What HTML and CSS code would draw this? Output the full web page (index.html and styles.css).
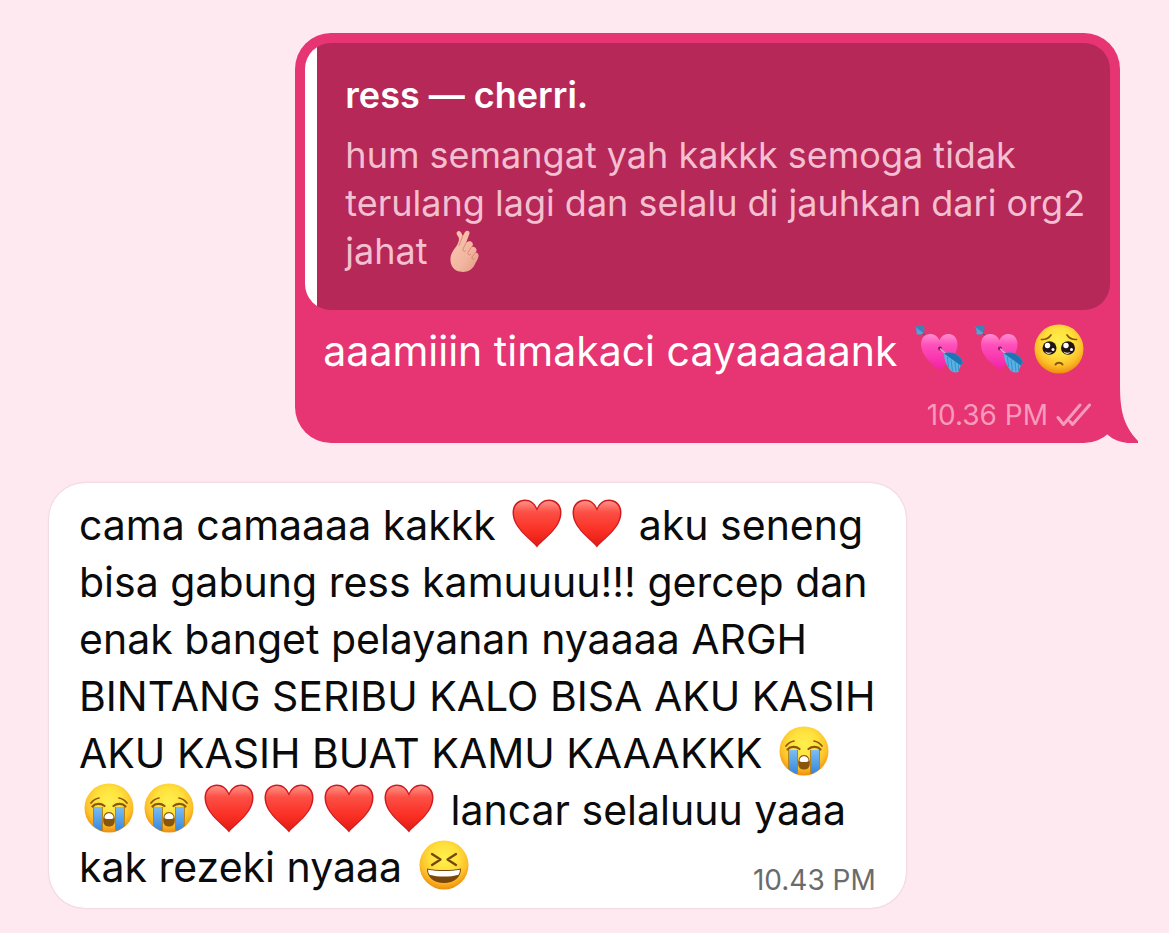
FILE: index.html
```html
<!DOCTYPE html>
<html lang="id">
<head>
    <meta charset="UTF-8">
    <meta name="viewport" content="width=device-width, initial-scale=1.0">
    <title>Chat</title>
    <link rel="stylesheet" href="styles.css">
</head>
<body>
    <svg class="sprite" aria-hidden="true">
        <defs>
            <radialGradient id="faceFill" cx="50%" cy="36%" r="64%">
                <stop offset="0" stop-color="#fff04e"/>
                <stop offset="0.45" stop-color="#ffe03c"/>
                <stop offset="0.75" stop-color="#fdc02a"/>
                <stop offset="1" stop-color="#ee8d0c"/>
            </radialGradient>
            <linearGradient id="heartFill" x1="0" y1="0" x2="0" y2="1">
                <stop offset="0" stop-color="#ff9087"/>
                <stop offset="0.25" stop-color="#fc4f45"/>
                <stop offset="0.65" stop-color="#fb3025"/>
                <stop offset="1" stop-color="#e01c14"/>
            </linearGradient>
            <linearGradient id="pinkFill" x1="0" y1="0" x2="0" y2="1">
                <stop offset="0" stop-color="#ff8fd2"/>
                <stop offset="0.3" stop-color="#ff4fba"/>
                <stop offset="1" stop-color="#f31fa4"/>
            </linearGradient>
            <linearGradient id="tearFill" x1="0" y1="0" x2="0" y2="1">
                <stop offset="0" stop-color="#7cbdf2"/>
                <stop offset="1" stop-color="#2f83dc"/>
            </linearGradient>
            <linearGradient id="skinFill" x1="0" y1="0" x2="1" y2="1">
                <stop offset="0" stop-color="#f9c8b2"/>
                <stop offset="0.6" stop-color="#f3b6a0"/>
                <stop offset="1" stop-color="#e39a82"/>
            </linearGradient>
            <clipPath id="faceClip"><circle cx="25" cy="25" r="24"/></clipPath>
        </defs>

        <symbol id="heart" viewBox="0 0 50 50">
            <path d="M25 49.5C20 42 .5 31 .5 14.5.5 6.5 6 1.500 13 1.500c5.500 0 9.500 3 12 8.500 2.500-5.500 6.500-8.500 12-8.500 7 0 12.500 5 12.500 13C49.500 31 30 42 25 49.500z" fill="#cf1a20"/>
            <path d="M25 48C20 41 2 30.500 2 14.500 2 7.500 7 3 13 3c5.500 0 9.500 3.500 12 10 2.500-6.500 6.500-10 12-10 6 0 11 4.500 11 11.500C48 30.500 30 41 25 48z" fill="url(#heartFill)"/>
        </symbol>

        <symbol id="crying" viewBox="0 0 50 50">
            <circle cx="25" cy="25" r="24.5" fill="url(#faceFill)"/>
            <g clip-path="url(#faceClip)">
                <path d="M10 24h8v26h-8zM32 24h8v26h-8z" fill="url(#tearFill)"/>
                <path d="M9.500 24v22M18.500 24v26M31.500 24v26M40.500 24v22" stroke="#b78419" fill="none"/>
            </g>
            <g fill="none" stroke="#8b570b" stroke-width="2.200" stroke-linecap="round">
                <path d="M7 20c2-2.500 5-4.500 8-5M35 15c3 .5 6 2.500 8 5" stroke-width="1.700"/>
                <path d="M8.500 23.500c3-3.500 8.500-3.500 12-.5M29.500 23c3.500-3 9-3 12 .5"/>
            </g>
            <path d="M25 29c3.800 0 5.800 3.500 5.800 8S28.800 43.500 25 43.500s-5.800-2-5.800-6.500S21.200 29 25 29z" fill="#8a560d"/>
            <path d="M25 30.200c2.800 0 4.500 2.300 4.500 4.300 0 1-1.500 1.500-4.500 1.500s-4.500-.5-4.500-1.500c0-2 1.700-4.300 4.500-4.300z" fill="#fff"/>
        </symbol>

        <symbol id="laughing" viewBox="0 0 50 50">
            <circle cx="25" cy="25" r="24.500" fill="url(#faceFill)"/>
            <path d="M13 14l8.500 5.500L13 25M37 14l-8.500 5.500L37 25" fill="none" stroke="#75460a" stroke-width="2.300" stroke-linecap="round" stroke-linejoin="round"/>
            <path d="M8 28.500c10 2 24 2 34 0 .5 8.500-7 14.500-17 14.500S7.500 37 8 28.500z" fill="#7a460b"/>
            <path d="M9 29.700c10 1.800 22 1.800 32 0-.1 2.300-.8 4-1.500 5-8 2.500-21 2.500-29 0-.8-1-1.400-2.700-1.500-5z" fill="#fff"/>
        </symbol>

        <symbol id="pleading" viewBox="0 0 50 50">
            <circle cx="25" cy="25" r="24.500" fill="url(#faceFill)"/>
            <g fill="none" stroke="#85530c" stroke-width="1.700" stroke-linecap="round">
                <path d="M7.500 15.500c4 .2 7.500-1.500 9.500-4.500M33 11c2 3 5.500 4.700 9.500 4.500"/>
                <path d="M21.500 40.500c1.500-2.500 5.500-2.500 7 0" stroke-width="2"/>
            </g>
            <ellipse cx="15.500" cy="24" rx="7" ry="6.700" fill="#201513"/>
            <ellipse cx="34" cy="24" rx="7" ry="6.700" fill="#201513"/>
            <g fill="#fff">
                <circle cx="13.500" cy="21.500" r="2.700"/>
                <circle cx="32" cy="21.500" r="2.700"/>
                <circle cx="19" cy="25.500" r="1.500"/>
                <circle cx="37.500" cy="25.500" r="1.500"/>
                <path d="M11 27.500c2.500 1.500 5 1.500 7 .5-1.500 2.500-5.500 2.500-7-.5zM29.500 27.500c2.500 1.500 5 1.500 7 .5-1.500 2.500-5.500 2.500-7-.5z"/>
            </g>
        </symbol>

        <symbol id="cupid" viewBox="0 0 50 50">
            <path d="M6 7l7 6" stroke="#7c4a7a" stroke-width="1.500"/>
            <path d="M1 3c3-2 6-2 9-1.500.8 3 .8 5-.8 7C7.500 10.500 5 11 2.500 10 3 7 2.500 5 1 3z" fill="#3d83b8"/>
            <path d="M2.500 10C3 7 2.500 5 1 3l8.500 6c-1.500 1.500-4.500 2-7 1z" fill="#58a3d2"/>
            <path d="M25.500 47C21 41.500 7 33 7 20.500 7 14 11 10 16 10c4.500 0 8 2.500 9.500 6.500C27 12.500 30 10 34.500 10c5 0 9 4 9 10C43.500 33 30 41.500 25.500 47z" fill="url(#pinkFill)"/>
            <circle cx="26" cy="24.500" r="2" fill="#8c135d"/>
            <path d="M26 24.500l6.500 6" stroke="#c9a6c5" stroke-width="1.700"/>
            <path d="M30 29.500c4-1.500 9-1.500 13 1.500 3 2 5 5 6 7.500-1.500 1-2.500 2-2.500 4-1 1.500-1.500 3-2 5.500-3 1-6 .5-8-1.500C33 42 30 36 30 29.500z" fill="#58b2e4"/>
            <path d="M30 29.500c4-1.500 9-1.500 13 1.500 3 2 5 5 6 7.500-1 .7-2 1.500-2.300 3z" fill="#1c75b4"/>
            <path d="M33.500 33l1 10M37 35.500l1.500 11.500M41 38l1 9.500M44.500 40.500v6" fill="none" stroke="#3488bd" stroke-width=".8"/>
        </symbol>

        <symbol id="fingers" viewBox="0 0 42 42">
            <path d="M13 2c2-2 4-.5 5 2.500l.8 1.500L21 2c1.500-2 5-1.500 4.500 1.500L22 13c2.500-2.500 5.500-2 6.500 0s0 3-1 4c2.500-1 5 .5 5 3 0 1.500-.5 2-1 2.500 2 0 3.500 1.500 3 4-.5 3-3 6-4 8.500-3 6-9 8-15 6.500C9 40 6 34.500 6.500 28c.3-4.500 3-8 6-12 1.500-2.500 2.500-5 2.500-7.500C14.500 6 11.500 4 13 2z" fill="url(#skinFill)"/>
            <path d="M18.800 6L15 15.500M22 13l-3 6c-.5 2 1 3 2.500 2M27.500 17L24 22.500c-.5 2 1 3 2.500 2M31.500 22.500L28 27c-.5 1.500.5 2.500 2 2" fill="none" stroke="#cf8267" stroke-width=".8" stroke-linecap="round"/>
        </symbol>
    </svg>

    <main class="chat">
        <article class="bubble sent">
            <blockquote class="quote">
                <h2 class="quote-name">ress — cherri.</h2>
                <p class="quote-text">hum semangat yah kakkk semoga tidak<br>terulang lagi dan selalu di jauhkan dari org2<br>jahat <svg class="emoji-small" role="img" aria-label="jari hati"><use href="#fingers"/></svg></p>
            </blockquote>
            <p class="message">aaamiiin timakaci cayaaaaank <svg class="emoji" role="img" aria-label="hati panah"><use href="#cupid"/></svg><svg class="emoji" role="img" aria-label="hati panah"><use href="#cupid"/></svg><svg class="emoji" role="img" aria-label="memohon"><use href="#pleading"/></svg></p>
            <footer class="meta">
                <time datetime="22:36">10.36 PM</time>
                <svg class="ticks" viewBox="0 0 36 24" role="img" aria-label="dibaca">
                    <path d="M2 14.500l5.500 7L24 2M14 18.500l2.500 3L33.500 2"/>
                </svg>
            </footer>
            <svg class="tail" viewBox="0 0 32 60" aria-hidden="true">
                <path d="M0 0h14c0 25 2 41 18 58v2C20 61 10 59 2 52L0 50z"/>
            </svg>
        </article>

        <article class="bubble received">
            <p class="message">cama camaaaa kakkk <svg class="emoji" role="img" aria-label="hati"><use href="#heart"/></svg><svg class="emoji" role="img" aria-label="hati"><use href="#heart"/></svg> aku seneng<br>bisa gabung ress kamuuuu!!! gercep dan<br>enak banget pelayanan nyaaaa ARGH<br>BINTANG SERIBU KALO BISA AKU KASIH<br>AKU KASIH BUAT KAMU KAAAKKK <svg class="emoji" role="img" aria-label="menangis"><use href="#crying"/></svg><br><svg class="emoji" role="img" aria-label="menangis"><use href="#crying"/></svg><svg class="emoji" role="img" aria-label="menangis"><use href="#crying"/></svg><svg class="emoji" role="img" aria-label="hati"><use href="#heart"/></svg><svg class="emoji" role="img" aria-label="hati"><use href="#heart"/></svg><svg class="emoji" role="img" aria-label="hati"><use href="#heart"/></svg><svg class="emoji" role="img" aria-label="hati"><use href="#heart"/></svg> lancar selaluuu yaaa</p>
            <div class="last-row">
                <p class="message">kak rezeki nyaaa <svg class="emoji" role="img" aria-label="tertawa"><use href="#laughing"/></svg></p>
                <footer class="meta">
                    <time datetime="22:43">10.43 PM</time>
                </footer>
            </div>
        </article>
    </main>
</body>
</html>
```

FILE: styles.css
```css
* {
    margin: 0;
    padding: 0;
    box-sizing: border-box;
}

body {
    font-family: Inter, "Liberation Sans", sans-serif;
    background-color: #ffe9f0;
    color: #0b0b0b;
}

.sprite {
    position: absolute;
    width: 0;
    height: 0;
}

.chat {
    display: flex;
    flex-direction: column;
    gap: 40px;
    padding: 33px 49px 24px;
}

.bubble {
    position: relative;
    border-radius: 36px;
}

.sent {
    align-self: flex-end;
    width: 77%;
    padding: 10px 10px 12px;
    background: #e63572;
    color: #fff;
}

.received {
    align-self: flex-start;
    width: 80%;
    padding: 14px 30px 12px;
    background: #fff;
    box-shadow: 0 0 2px rgba(120, 60, 80, 0.3);
}

/* gradient instead of a border keeps the white bar straight on its inner edge */
.quote {
    padding: 28px 20px 35px 40px;
    border-radius: 26px;
    background: linear-gradient(to right, #fff 12px, #b62857 12px);
}

.quote-name {
    margin-bottom: 12px;
    font-size: 36px;
    font-weight: 600;
    line-height: 48px;
}

.quote-text {
    color: #f4bfd0;
    font-size: 36px;
    line-height: 48px;
}

.message {
    font-size: 41px;
    line-height: 57px;
}

.sent .message {
    padding: 13px 18px 0;
}

.emoji {
    width: 50px;
    height: 50px;
    margin: 0 5px;
    vertical-align: -8px;
}

.emoji-small {
    width: 42px;
    height: 42px;
    margin-left: 6px;
    vertical-align: -8px;
}

.meta {
    display: flex;
    align-items: center;
    justify-content: flex-end;
    gap: 8px;
    font-size: 28px;
    line-height: 32px;
}

.sent .meta {
    padding: 19px 18px 0;
    color: #f79abb;
}

.received .meta {
    color: #6b6b6b;
}

.ticks {
    width: 36px;
    height: 24px;
    fill: none;
    stroke: #f79abb;
    stroke-width: 3;
    stroke-linecap: round;
    stroke-linejoin: round;
}

.tail {
    position: absolute;
    right: -18px;
    bottom: 0;
    width: 32px;
    height: 60px;
    fill: #e63572;
}

.last-row {
    display: flex;
    align-items: flex-end;
    justify-content: space-between;
}
```
